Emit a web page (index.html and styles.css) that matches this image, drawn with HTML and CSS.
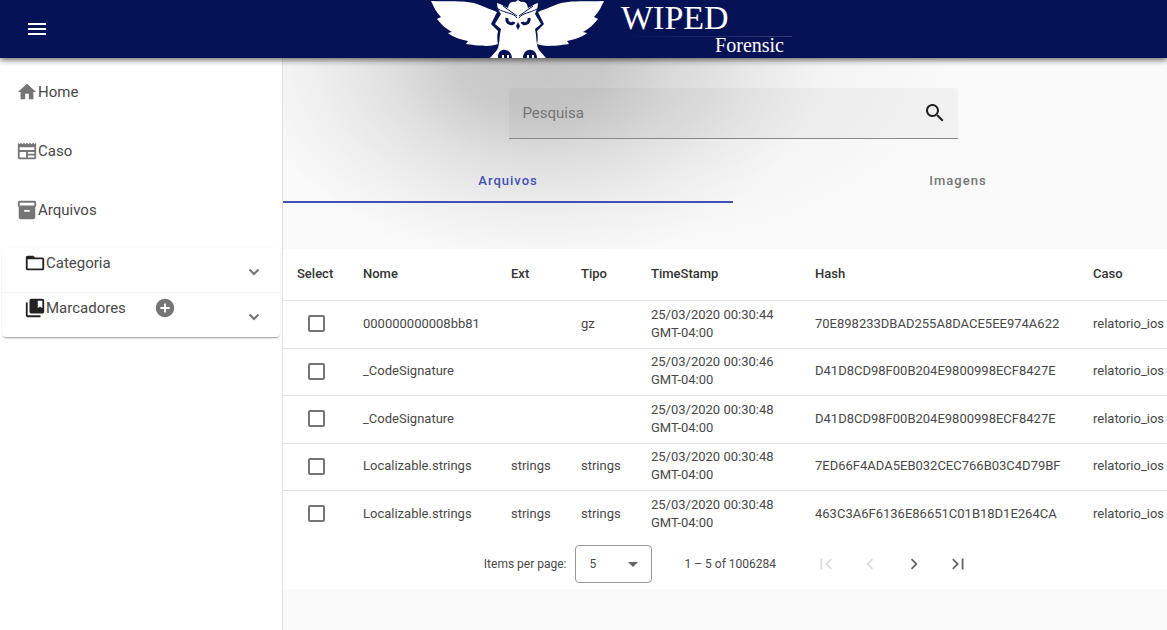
FILE: index.html
```html
<!DOCTYPE html>
<html lang="pt-BR">
<head>
<meta charset="utf-8">
<meta name="viewport" content="width=device-width, initial-scale=1">
<title>WIPED Forensic</title>
<link rel="stylesheet" href="styles.css">
</head>
<body>
<header class="topbar">
  <button class="menu-button" type="button" aria-label="Menu">
    <svg class="icon-menu" viewBox="0 0 18 12"><path d="M0 0h18v2H0zM0 5h18v2H0zM0 10h18v2H0z"/></svg>
  </button>
  <div class="brand">
    <svg class="owl" viewBox="0 0 176 58" aria-hidden="true">
      <defs>
        <path id="wing" d="M0 1C16 2 34 0 46 4C54 7 61 10 66 12L60 24L67 31C66 36 66 40 67 44C62 46 55 47 35 44L37 41C28 39 22 37 17 33L21 32C14 28 10 24 6 19L10 17C5 12 3 7 0 1Z"/>
      </defs>
      <g fill="#fff">
        <use href="#wing"/>
        <use href="#wing" transform="translate(173 0) scale(-1 1)"/>
        <path d="M66 3C70 4 74 7 77 8C78 3 80 1 84 2L87 0L90 2C94 1 96 3 97 8C100 7 103 4 107 3C107 8 105 11 104 14L110 24L104 29C106 38 105 46 108 50L115 58H59L66 50C69 45 68 37 70 29L64 24L70 14C68 11 66 8 66 3Z"/>
      </g>
      <g fill="none" stroke="#061256">
        <path d="M67 9C74 13 83 13 86 18M106 9C99 13 91 13 88 18M72 6L86 16M102 6L88 16"/>
        <path d="M76 18C75 24 82 25 83 22M98 18C99 24 92 25 91 22" stroke-width="3"/>
      </g>
      <g fill="#061256"><path d="M87 22L89 26L87 30L85 26Z"/><path d="M67 58C66 47 80 47 81 58ZM92 58C92 47 106 47 106 58Z"/></g>
      <path d="M72 58V55M77 58V55M97 58V55M102 58V55" stroke="#fff" stroke-width="2"/>
    </svg>
    <div class="wordmark">
      <span class="wordmark-name">WIPED</span>
      <span class="wordmark-rule"></span>
      <span class="wordmark-sub">Forensic</span>
    </div>
  </div>
</header>

<div class="shell">
  <nav class="sidebar">
    <a class="nav-link" href="#">
      <svg class="icon" viewBox="0 0 24 24"><path d="M10 20v-6h4v6h5v-8h3L12 3 2 12h3v8z"/></svg><span>Home</span>
    </a>
    <a class="nav-link" href="#">
      <svg class="icon" viewBox="0 0 24 24"><path d="M22 3l-1.700 1.700L18.700 3 17 4.700 15.300 3l-1.600 1.700L12 3l-1.700 1.700L8.700 3 7 4.700 5.300 3 3.700 4.700 2 3v16c0 1.100.9 2 2 2h16c1.100 0 2-.9 2-2zM11 19H4v-6h7zm9 0h-7v-2h7zm0-4h-7v-2h7zm0-4H4V8h16z"/></svg><span>Caso</span>
    </a>
    <a class="nav-link" href="#">
      <svg class="icon" viewBox="0 0 24 24"><path d="M20 2H4c-1 0-2 .9-2 2v3c0 .7.4 1.300 1 1.700V20c0 1.100 1.100 2 2 2h14c.9 0 2-.9 2-2V8.700c.6-.4 1-1 1-1.700V4c0-1.100-1-2-2-2zm-5 12H9v-2h6zm5-7H4V4h16z"/></svg><span>Arquivos</span>
    </a>
    <div class="panels">
      <div class="panel">
        <button class="panel-toggle" type="button">
          <svg class="icon icon-dark" viewBox="0 0 24 24"><path d="M20 6h-8l-2-2H4c-1.100 0-2 .9-2 2v12c0 1.100.9 2 2 2h16c1.100 0 2-.9 2-2V8c0-1.100-.9-2-2-2zm0 12H4V8h16z"/></svg><span>Categoria</span>
          <svg class="chevron" viewBox="0 0 12 8"><path d="M1.500 1.500L6 6l4.500-4.500"/></svg>
        </button>
      </div>
      <div class="panel">
        <button class="panel-toggle" type="button">
          <svg class="icon icon-dark" viewBox="0 0 24 24"><path d="M4 6H2v14c0 1.100.9 2 2 2h14v-2H4zM20 2H8c-1.100 0-2 .9-2 2v12c0 1.100.9 2 2 2h12c1.100 0 2-.9 2-2V4c0-1.100-.9-2-2-2zm0 10l-2.500-1.500L15 12V4h5z"/></svg><span>Marcadores</span>
          <svg class="icon icon-add" viewBox="0 0 24 24"><path d="M12 2C6.500 2 2 6.500 2 12s4.500 10 10 10 10-4.500 10-10S17.500 2 12 2zm5 11h-4v4h-2v-4H7v-2h4V7h2v4h4z"/></svg>
          <svg class="chevron" viewBox="0 0 12 8"><path d="M1.500 1.500L6 6l4.500-4.500"/></svg>
        </button>
      </div>
    </div>
  </nav>

  <main class="content">
    <div class="finder">
      <form class="search">
        <input class="search-input" type="text" placeholder="Pesquisa" aria-label="Pesquisa">
        <button class="search-button" type="button" aria-label="Buscar">
          <svg class="icon-search" viewBox="3 3 18 18"><path d="M15.500 14h-.8l-.3-.3A6.500 6.500 0 1 0 13.700 14.400l.3.300v.8l5 5 1.500-1.500zm-6 0a4.500 4.500 0 1 1 0-9 4.500 4.500 0 0 1 0 9z"/></svg>
        </button>
      </form>
      <div class="tabs" role="tablist">
        <button class="tab tab-active" type="button" role="tab" aria-selected="true">Arquivos</button>
        <button class="tab" type="button" role="tab" aria-selected="false">Imagens</button>
      </div>
    </div>
    <div class="results">
      <table class="files">
        <colgroup><col class="col-select"><col class="col-name"><col class="col-short"><col class="col-short"><col class="col-time"><col class="col-hash"><col class="col-case"></colgroup>
        <thead><tr><th>Select</th><th>Nome</th><th>Ext</th><th>Tipo</th><th>TimeStamp</th><th>Hash</th><th>Caso</th></tr></thead>
        <tbody>
          <tr><td><input class="check" type="checkbox" aria-label="Selecionar 000000000008bb81"></td><td>000000000008bb81</td><td></td><td>gz</td><td>25/03/2020 00:30:44 GMT-04:00</td><td>70E898233DBAD255A8DACE5EE974A622</td><td>relatorio_ios</td></tr>
          <tr><td><input class="check" type="checkbox" aria-label="Selecionar _CodeSignature"></td><td>_CodeSignature</td><td></td><td></td><td>25/03/2020 00:30:46 GMT-04:00</td><td>D41D8CD98F00B204E9800998ECF8427E</td><td>relatorio_ios</td></tr>
          <tr><td><input class="check" type="checkbox" aria-label="Selecionar _CodeSignature"></td><td>_CodeSignature</td><td></td><td></td><td>25/03/2020 00:30:48 GMT-04:00</td><td>D41D8CD98F00B204E9800998ECF8427E</td><td>relatorio_ios</td></tr>
          <tr><td><input class="check" type="checkbox" aria-label="Selecionar Localizable.strings"></td><td>Localizable.strings</td><td>strings</td><td>strings</td><td>25/03/2020 00:30:48 GMT-04:00</td><td>7ED66F4ADA5EB032CEC766B03C4D79BF</td><td>relatorio_ios</td></tr>
          <tr><td><input class="check" type="checkbox" aria-label="Selecionar Localizable.strings"></td><td>Localizable.strings</td><td>strings</td><td>strings</td><td>25/03/2020 00:30:48 GMT-04:00</td><td>463C3A6F6136E86651C01B18D1E264CA</td><td>relatorio_ios</td></tr>
        </tbody>
      </table>
      <div class="paginator">
        <label class="page-label" for="page-size">Items per page:</label>
        <div class="select-box">
          <select class="page-size" id="page-size"><option>5</option><option>10</option><option>25</option></select>
          <svg class="caret" viewBox="0 0 10 5"><path d="M0 0h10L5 5z"/></svg>
        </div>
        <span class="range">1 – 5 of 1006284</span>
        <div class="pager">
          <button class="pager-button" type="button" disabled aria-label="First page"><svg class="pager-icon" viewBox="0 0 24 24"><path d="M18.400 16.600L13.800 12l4.600-4.600L17 6l-6 6 6 6zM6 6h2v12H6z"/></svg></button>
          <button class="pager-button" type="button" disabled aria-label="Previous page"><svg class="pager-icon" viewBox="0 0 24 24"><path d="M15.400 7.400L14 6l-6 6 6 6 1.400-1.400L10.800 12z"/></svg></button>
          <button class="pager-button" type="button" aria-label="Next page"><svg class="pager-icon" viewBox="0 0 24 24"><path d="M10 6L8.600 7.400 13.200 12l-4.600 4.600L10 18l6-6z"/></svg></button>
          <button class="pager-button" type="button" aria-label="Last page"><svg class="pager-icon" viewBox="0 0 24 24"><path d="M5.600 7.400L10.200 12l-4.600 4.600L7 18l6-6-6-6zM16 6h2v12h-2z"/></svg></button>
        </div>
      </div>
    </div>
  </main>
</div>
</body>
</html>
```
FILE: styles.css
```css
* { box-sizing: border-box; }
body {
  margin: 0;
  min-height: 100vh;
  display: flex;
  flex-direction: column;
  overflow-x: hidden;
  background: #fff;
  color: #484848;
  font-family: Roboto, sans-serif;
  font-size: 13px;
}
button, input, select { font: inherit; color: inherit; }
button { border: 0; padding: 0; background: none; cursor: pointer; }

.topbar {
  position: relative;
  z-index: 1;
  display: flex;
  align-items: center;
  height: 58px;
  padding-left: 28px;
  background: #061256;
  box-shadow: 0 2px 6px rgba(0, 0, 0, 0.6);
}
.menu-button { display: flex; width: 18px; }
.icon-menu { width: 18px; height: 12px; fill: #fff; }
.brand {
  flex: 1;
  display: flex;
  justify-content: center;
  gap: 14px;
  padding-left: 10px;
}
.owl { flex: none; width: 176px; height: 58px; }
.wordmark {
  display: flex;
  flex-direction: column;
  width: 171px;
  color: #fff;
  font-family: "Liberation Serif", serif;
}
.wordmark-name { font-size: 34px; line-height: 36px; }
.wordmark-rule { height: 1px; background: linear-gradient(90deg, transparent, #343d75); }
.wordmark-sub { padding-right: 8px; font-size: 20px; line-height: 16px; text-align: right; }

.shell { flex: 1; display: flex; }
.sidebar {
  flex: none;
  width: 283px;
  padding: 4px 2px 0;
  border-right: 1px solid #e0e0e0;
  font-size: 15px;
}
.nav-link {
  display: flex;
  align-items: center;
  height: 59px;
  padding-left: 14px;
  color: #484848;
  text-decoration: none;
}
.icon { flex: none; width: 22px; height: 22px; fill: #757575; }
.icon-dark { fill: #222; }
.icon-add { margin-left: 28px; }
.panels {
  margin-top: 9px;
  border-radius: 4px;
  box-shadow: 0 2px 2px -1px rgba(0, 0, 0, 0.4), 0 0 2px rgba(0, 0, 0, 0.05);
}
.panel + .panel { border-top: 1px solid #f3f3f3; }
.panel-toggle {
  display: flex;
  align-items: flex-start;
  width: 100%;
  height: 44px;
  padding: 4px 20px 0 22px;
  line-height: 22px;
}
.chevron { width: 12px; height: 8px; margin: 16px 0 0 auto; fill: none; stroke: #757575; stroke-width: 2; }

.content {
  flex: 1;
  min-width: 0;
  padding-top: 30px;
  background:
    radial-gradient(ellipse 290px 210px at 28% 0, rgba(0, 0, 0, 0.16), rgba(0, 0, 0, 0.15) 25%, rgba(0, 0, 0, 0.08) 50%, rgba(0, 0, 0, 0.03) 75%, transparent),
    radial-gradient(ellipse 380px 210px at 36% 0, rgba(0, 0, 0, 0.06), rgba(0, 0, 0, 0.05) 30%, rgba(0, 0, 0, 0.02) 65%, transparent),
    #fafafa;
}
.finder { margin-right: -16px; }
.search {
  display: flex;
  align-items: center;
  width: 449px;
  height: 51px;
  margin: 0 auto;
  padding: 0 14px;
  border-bottom: 1px solid #888;
  border-radius: 4px 4px 0 0;
  background: rgba(0, 0, 0, 0.03);
  font-size: 15px;
}
.search-input { flex: 1; min-width: 0; border: 0; padding: 0; outline: 0; background: none; }
.search-input::placeholder { color: #757575; opacity: 1; }
.search-button { display: flex; }
.icon-search { width: 18px; height: 18px; fill: #222; }
.tabs { display: flex; margin-top: 20px; }
.tab {
  flex: 1;
  height: 44px;
  border-bottom: 2px solid transparent;
  color: #757575;
  font-weight: 500;
  letter-spacing: 1px;
}
.tab-active { border-color: #3f51b5; color: #3f51b5; }

.results { margin-top: 46px; background: #fff; overflow: hidden; }
.files { width: 100%; table-layout: fixed; border-collapse: collapse; }
.col-select { width: 66px; }
.col-name { width: 148px; }
.col-short { width: 70px; }
.col-time { width: 164px; }
.col-hash { width: 278px; }
.files th { height: 51px; padding: 0 14px 2px; color: #333; font-weight: 500; text-align: left; }
.files td { height: 48px; padding: 0 14px 1px; border-top: 1px solid #e0e0e0; line-height: 18px; }
.files tr:nth-child(even) td { height: 47px; }
.files th, .files td { white-space: nowrap; }
.files td:nth-child(5) { white-space: normal; }
.check {
  display: block;
  appearance: none;
  width: 17px;
  height: 17px;
  margin: 0 auto;
  border: 2px solid #757575;
  border-radius: 2px;
}
.paginator {
  display: flex;
  align-items: center;
  justify-content: flex-end;
  padding: 7px 187px 6px 0;
  font-size: 12px;
}
.select-box { position: relative; margin-left: 8px; }
.page-size {
  display: block;
  appearance: none;
  width: 77px;
  height: 38px;
  padding: 0 14px;
  border: 1px solid #999;
  border-radius: 4px;
  background: none;
}
.caret { position: absolute; top: 17px; right: 14px; width: 10px; height: 5px; fill: #666; }
.range { margin: 0 28px 0 33px; }
.pager { display: flex; }
.pager-button { display: flex; align-items: center; justify-content: center; width: 44px; height: 38px; }
.pager-icon { width: 22px; height: 22px; fill: #666; }
.pager-button:disabled .pager-icon { fill: #ddd; }
```
